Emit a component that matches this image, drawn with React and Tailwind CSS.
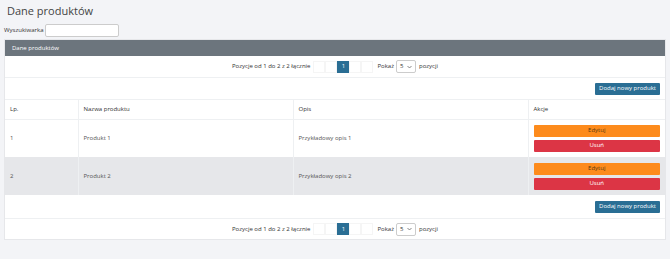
import React from "react";

const font = { fontFamily: '"Open Sans", "Noto Sans", sans-serif' };

function Pagination({ h }) {
  return (
    <div className={`flex items-center justify-center text-[6px] text-[#333] ${h}`}>
      <span className="mr-[3px]">Pozycje od 1 do 2 z 2 łącznie</span>
      <div className="flex items-center">
        <div className="w-[12px] h-[12px] border border-[#f5f5f5] bg-white"></div>
        <div className="w-[12px] h-[12px] border border-[#f5f5f5] bg-white"></div>
        <div className="w-[12px] h-[12px] bg-[#2a6e94] text-white flex items-center justify-center">1</div>
        <div className="w-[12px] h-[12px] border border-[#f5f5f5] bg-white"></div>
        <div className="w-[12px] h-[12px] border border-[#f5f5f5] bg-white"></div>
      </div>
      <span className="ml-[4px] mr-[2px]">Pokaż</span>
      <div className="flex items-center justify-between w-[20px] h-[13px] border border-[#ccc] rounded-[2px] px-[3px] bg-white">
        <span>5</span>
        <svg width="5" height="4" viewBox="0 0 10 6"><path d="M1 1l4 4 4-4" fill="none" stroke="#555" strokeWidth="1.4" /></svg>
      </div>
      <span className="ml-[3px]">pozycji</span>
    </div>
  );
}

function AddRow({ h }) {
  return (
    <div className={`flex items-center justify-end pr-[5px] border-b border-[#eef0f2] ${h}`}>
      <button className="h-[12px] px-[4px] bg-[#2a6e94] text-white text-[6px] rounded-[1px]">Dodaj nowy produkt</button>
    </div>
  );
}

export default function App() {
  const rows = [
    { id: 1, name: "Produkt 1", desc: "Przykładowy opis 1", bg: "bg-white" },
    { id: 2, name: "Produkt 2", desc: "Przykładowy opis 2", bg: "bg-[#e6e7ea]" },
  ];
  return (
    <div style={font} className="bg-[#f3f4f7] min-h-[259px] px-[4px] text-[#444]">
      <div className="text-[11px] pl-[3px] pt-[2px] leading-[17px] text-[#444]">Dane produktów</div>
      <div className="flex items-center h-[16px] mt-[3px] text-[6px] text-[#333]">
        <span>Wyszukiwarka</span>
        <input className="ml-[1px] w-[74px] h-[13px] bg-white border border-[#ccc] rounded-[2px]" />
      </div>
      <div className="mt-[1px] bg-white border border-[#e6e7ea]">
        <div className="h-[16px] bg-[#6c757d] text-white text-[6px] flex items-center pl-[7px]">Dane produktów</div>
        <div className="border-b border-[#eef0f2]"><Pagination h="h-[21px]" /></div>
        <AddRow h="h-[22px]" />
        <table className="w-full border-collapse text-[6px] text-[#555]">
          <thead>
            <tr className="h-[19px] border-b border-[#eef0f2] text-[#333]">
              <th className="w-[73px] text-left font-normal pl-[5px] border-r border-[#eef0f2]">Lp.</th>
              <th className="w-[215px] text-left font-normal pl-[5px] border-r border-[#eef0f2]">Nazwa produktu</th>
              <th className="w-[235px] text-left font-normal pl-[5px] border-r border-[#eef0f2]">Opis</th>
              <th className="text-left font-normal pl-[5px]">Akcje</th>
            </tr>
          </thead>
          <tbody>
            {rows.map((r) => (
              <tr key={r.id} className={`${r.bg} h-[38px]`}>
                <td className="pl-[5px] border-r border-[#eef0f2]">{r.id}</td>
                <td className="pl-[5px] border-r border-[#eef0f2]">{r.name}</td>
                <td className="pl-[5px] border-r border-[#eef0f2]">{r.desc}</td>
                <td className="px-[5px]">
                  <div className="flex flex-col gap-[3px]">
                    <button className="h-[12px] bg-[#fd8b1c] text-[#5a3a10] rounded-[1px]">Edytuj</button>
                    <button className="h-[12px] bg-[#dc3545] text-white rounded-[1px]">Usuń</button>
                  </div>
                </td>
              </tr>
            ))}
          </tbody>
        </table>
        <AddRow h="h-[24px]" />
        <Pagination h="h-[20px]" />
      </div>
    </div>
  );
}
